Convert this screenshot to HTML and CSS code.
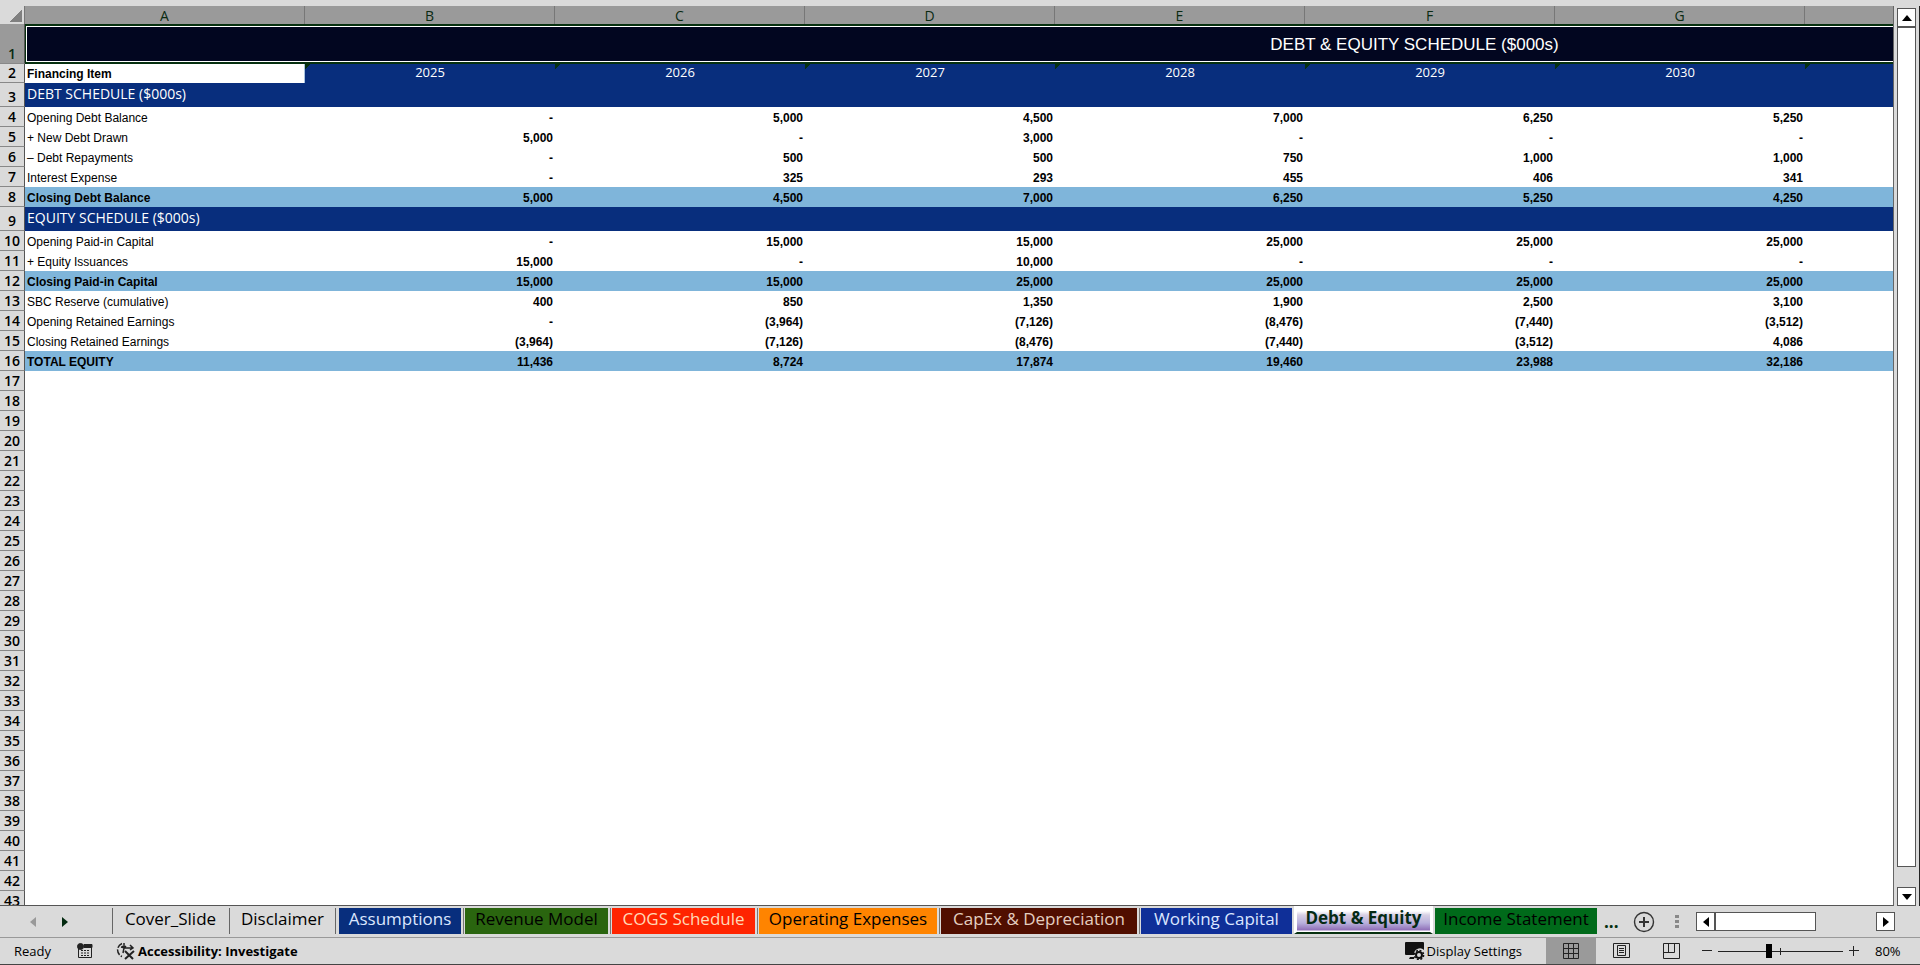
FILE: index.html
```html
<!DOCTYPE html>
<html lang="en">
<head>
  <meta charset="UTF-8" />
  <title>Debt &amp; Equity</title>
  <link rel="stylesheet" href="styles.css">
</head>
<body>

  <main class="workspace">
    <div class="sheet">
      <table id="grid">
        <colgroup>
          <col class="col-num"><col class="col-a">
          <col class="col"><col class="col"><col class="col"><col class="col"><col class="col">
          <col class="col"><col class="col"><col class="col"><col class="col"><col class="col">
        </colgroup>
        <thead>
          <tr class="letters">
            <th class="corner"></th><th>A</th><th>B</th><th>C</th><th>D</th><th>E</th><th>F</th><th>G</th><th></th><th></th><th></th><th></th>
          </tr>
        </thead>
        <tbody id="rows"></tbody>
      </table>
    </div>
    <div class="vscroll">
      <button class="arrow" aria-label="Scroll up"><svg width="10" height="6"><path d="M5 0l5 6H0z"/></svg></button>
      <div class="vthumb"></div>
      <button class="arrow" aria-label="Scroll down"><svg width="10" height="6"><path d="M0 0h10L5 6z"/></svg></button>
    </div>
  </main>

  <nav class="tabbar">
    <div class="tabnav">
      <button aria-label="Previous sheet"><svg width="6" height="10" fill="#999"><path d="M6 0v10L0 5z"/></svg></button>
      <button aria-label="Next sheet"><svg width="6" height="10" fill="#032a10"><path d="M0 0v10l6-5z"/></svg></button>
    </div>
    <div class="tabs">
      <button class="tab cover">Cover_Slide</button>
      <button class="tab disclaimer">Disclaimer</button>
      <button class="tab navy">Assumptions</button>
      <button class="tab green">Revenue Model</button>
      <button class="tab red">COGS Schedule</button>
      <button class="tab orange">Operating Expenses</button>
      <button class="tab brown">CapEx &amp; Depreciation</button>
      <button class="tab blue">Working Capital</button>
      <button class="tab active">Debt &amp; Equity</button>
      <button class="tab emerald">Income Statement</button>
    </div>
    <button class="more">...</button>
    <button class="add" aria-label="New sheet">
      <svg width="22" height="22" fill="none" stroke="#333"><circle cx="11" cy="11" r="9.5" stroke-width="1.4"/><path d="M11 6v10M6 11h10" stroke-width="2"/></svg>
    </button>
    <svg class="grip" width="4" height="14" fill="#888"><path d="M0 0h4v3H0zM0 5h4v3H0zM0 10h4v3H0z"/></svg>
    <div class="hscroll">
      <button class="arrow" aria-label="Scroll left"><svg width="6" height="10"><path d="M6 0v10L0 5z"/></svg></button>
      <div class="hthumb"></div>
      <button class="arrow" aria-label="Scroll right"><svg width="6" height="10"><path d="M0 0v10l6-5z"/></svg></button>
    </div>
  </nav>

  <footer class="status">
    <span class="ready">Ready</span>
    <button class="macro" aria-label="Record macro">
      <svg width="16" height="16" fill="none" stroke="#222"><path d="M1.500 5v9.500h13V2.500H7" /><path d="M7 1.500h8v3H7z" fill="#222"/><circle cx="3.500" cy="3.500" r="3" fill="#222"/><path d="M4 7.500h9M4 10h9M4 12.500h9" stroke-dasharray="2 1"/></svg>
    </button>
    <button class="access">
      <svg width="20" height="18" fill="none" stroke="#222" stroke-width="1.500"><path d="M6 1.500A7 7 0 0 0 6 14.500" stroke-dasharray="6 1.500"/><path d="M5 5l4 1h7M14 3l3 3-3 2M8 1v5l-1 5M6 4l2 2 2-2"/><path d="M9 9l8 8M18 9l-9 8" stroke-width="2"/></svg>
      Accessibility: Investigate
    </button>
    <button class="display">
      <svg width="20" height="18" fill="#111"><path d="M1 0h17q1 0 1 1v7a6 6 0 0 0-10 5H1q-1 0-1-1V1q0-1 1-1zM5 15h4v2H4z"/><circle cx="14" cy="13" r="3" fill="none" stroke="#111" stroke-width="2"/><circle cx="14" cy="13" r="4.600" fill="none" stroke="#111" stroke-width="1.500" stroke-dasharray="2 1.600"/></svg>
      Display Settings
    </button>
    <div class="views">
      <button class="view on" aria-label="Normal">
        <svg width="17" height="17" fill="none" stroke="#222"><path d="M.5.5h15v15H.5zM5.500.5v15M10.500.5v15M.5 5.500h15M.5 10.500h15"/></svg>
      </button>
      <button class="view" aria-label="Page layout">
        <svg width="17" height="17" fill="none" stroke="#222"><path d="M.5.5h16v14H.5zM4.500 2.500h8v10h-8zM6 5.500h5M6 7.500h5M6 9.500h5"/></svg>
      </button>
      <button class="view" aria-label="Page break preview">
        <svg width="17" height="17" fill="none" stroke="#222"><path d="M.5.5h16v15H.5zM.5 9.500h11V.5M5.500.5v9"/></svg>
      </button>
    </div>
    <button class="step" aria-label="Zoom out"><svg width="10" height="10" stroke="#222"><path d="M0 4.500h10"/></svg></button>
    <input type="range" class="zoom" min="10" max="150" value="66" aria-label="Zoom">
    <button class="step" aria-label="Zoom in"><svg width="10" height="10" stroke="#222"><path d="M0 4.500h10M4.500 0v10"/></svg></button>
    <span class="percent">80%</span>
  </footer>

  <script src="script.js"></script>
</body>
</html>
```
FILE: styles.css
```css
* { box-sizing: border-box; }
body {
  margin: 0;
  height: 100vh;
  display: flex;
  flex-direction: column;
  overflow: hidden;
  background: #dadada;
  color: #000;
  font-family: "Open Sans", "Noto Sans", sans-serif;
  border-bottom: 1px solid #444;
}
button {
  margin: 0;
  padding: 0;
  border: none;
  background: none;
  font: inherit;
  color: inherit;
}
svg { display: block; }

/* sheet */
.workspace {
  flex: 1;
  min-height: 0;
  display: flex;
  padding-top: 6px;
}
.sheet {
  flex: 1;
  min-width: 0;
  overflow: hidden;
  background: #fff;
  border-right: 1px solid #666;
  border-bottom: 1px solid #555;
}
table {
  width: 2805px;
  table-layout: fixed;
  border-collapse: separate;
  border-spacing: 0;
}
.col-num { width: 25px; }
.col-a { width: 280px; }
.col { width: 250px; }
th, td { padding: 0; overflow: hidden; white-space: nowrap; }
.letters th {
  height: 18px;
  padding-top: 2px;
  background: #9a9a9a;
  border-right: 1px solid #777;
  color: #0a2a12;
  font-size: 14px;
  line-height: 16px;
  font-weight: 500;
}
.letters .corner {
  background: linear-gradient(135deg, #dadada 50%, #808080 50%) 10px 4px / 12px 12px no-repeat #dadada;
}
.num {
  height: 20px;
  background: #dadada;
  border-right: 1px solid #555;
  border-bottom: 1px solid #888;
  font-size: 14px;
  line-height: 19px;
  font-weight: 600;
  vertical-align: bottom;
}
td {
  height: 20px;
  padding: 2px 2px 0;
  font: 12px/18px "Liberation Sans", Arial, sans-serif;
}
td.value {
  text-align: right;
  font-weight: bold;
}
.title .num { height: 40px; background: #9a9a9a; color: #0a2a12; }
.title td {
  background: #020620;
  border: 2px solid #06300f;
  border-left-width: 1px;
  box-shadow: inset 0 0 0 1px #fff;
  color: #fff;
  text-align: center;
  font-size: 17px;
}
.years .num, .years td { height: 19px; line-height: 18px; }
.years td {
  padding-top: 0;
  font-weight: bold;
  border-right: 1px solid #a9c4e0;
}
.years .year {
  padding-bottom: 2px;
  border: none;
  background: linear-gradient(135deg, #06300f 4px, transparent 4px) #082e7d;
  color: #fff;
  font: 13px/17px "Open Sans", sans-serif;
  text-align: center;
}
.section .num { height: 24px; }
.section td {
  height: 24px;
  padding: 0 2px 2px;
  background: #082e7d;
  color: #fff;
  font: 14px/22px "Open Sans", sans-serif;
}
.total td { background: #7fb5da; font-weight: bold; }

.vscroll {
  width: 26px;
  display: flex;
  flex-direction: column;
  padding: 2px 4px 0 3px;
  border-right: 1px solid #222;
}
.arrow {
  display: grid;
  place-items: center;
  flex: none;
  width: 19px;
  height: 19px;
  background: #fff;
  border: 1px solid #555;
}
.vthumb {
  flex: 1;
  width: 19px;
  margin-bottom: 20px;
  background: #fff;
  border: 1px solid #555;
}

/* sheet tabs */
.tabbar {
  flex: none;
  height: 32px;
  display: flex;
  align-items: center;
  border-bottom: 1px solid #999;
}
.tabnav {
  width: 112px;
  display: flex;
  gap: 26px;
  padding-left: 30px;
}
.tabs {
  height: 32px;
  display: flex;
  font-size: 17px;
  line-height: 22px;
}
.tab {
  flex: none;
  height: 26px;
  margin-top: 2px;
  padding-bottom: 3px;
  border-right: 1px solid #dadada;
}
/* divider between two tabs */
.tab:nth-child(n+3):nth-child(-n+7) {
  margin-right: 4px;
  border: none;
  box-shadow: 2px 0 #dadada, 3px 0 #777;
}
.cover, .disclaimer { border-left: 1px solid #666; }
.cover { width: 117px; }
.disclaimer { width: 107px; border-right: 1px solid #666; margin-right: 3px; }
.navy { width: 122px; background: #082e7d; color: #dbe6ff; }
.green { width: 143px; background: #2a650f; }
.red { width: 143px; background: #ff2400; color: #ffd9b8; }
.orange { width: 178px; background: #ff8400; font-weight: 500; }
.brown { width: 196px; background: #500e00; color: #e5cfc0; }
.blue { width: 152px; background: #0f2f98; color: #dbe6ff; margin-right: 1px; }
.active {
  width: 139px;
  height: 28px;
  margin: 0 2px 0 0;
  padding-bottom: 1px;
  border: 3px solid #fff;
  border-top: none;
  border-bottom: 2px solid #06300f;
  background: linear-gradient(#fff 5px, #d8d0e4 9px, #b8b0dc 17px, #9070b8 24px, #fff 25px);
  color: #052a14;
  font-weight: bold;
}
.emerald { width: 163px; background: #006a1a; }
.more {
  margin-left: 6px;
  font-size: 17px;
  font-weight: bold;
  color: #063010;
  line-height: 20px;
}
.add { margin-left: 14px; }
.grip { margin: 0 17px 0 auto; }
.hscroll { display: flex; margin-right: 25px; }
.hthumb {
  width: 101px;
  height: 19px;
  margin-right: 60px;
  background: #fff;
  border: 1px solid #555;
}

/* status bar */
.status {
  flex: none;
  height: 26px;
  display: flex;
  align-items: center;
  font-size: 13px;
}
.ready { width: 63px; padding-left: 14px; }
.macro { width: 53px; padding-left: 14px; }
.access, .display { display: flex; align-items: center; gap: 2px; }
.access { font-weight: bold; }
.display { margin-left: auto; }
.views { display: flex; margin: 0 6px 0 24px; }
.view {
  display: grid;
  place-items: center;
  width: 50px;
  height: 26px;
}
.on { background: #9a9a9a; }
.zoom {
  appearance: none;
  width: 125px;
  height: 16px;
  margin: 0 6px;
  background: linear-gradient(#222, #222) 62px 50% / 1px 7px no-repeat,
    linear-gradient(#222, #222) 0 50% / 100% 1px no-repeat;
}
.zoom::-webkit-slider-thumb {
  appearance: none;
  width: 6px;
  height: 14px;
  background: #000;
}
.percent { width: 61px; padding-left: 16px; }
```
FILE: script.js
```js
const rows = [
  ['title', 'DEBT & EQUITY SCHEDULE ($000s)'],
  ['years', 'Financing Item', '2025', '2026', '2027', '2028', '2029', '2030'],
  ['section', 'DEBT SCHEDULE ($000s)'],
  ['', 'Opening Debt Balance', '-', '5,000', '4,500', '7,000', '6,250', '5,250'],
  ['', '+ New Debt Drawn', '5,000', '-', '3,000', '-', '-', '-'],
  ['', '– Debt Repayments', '-', '500', '500', '750', '1,000', '1,000'],
  ['', 'Interest Expense', '-', '325', '293', '455', '406', '341'],
  ['total', 'Closing Debt Balance', '5,000', '4,500', '7,000', '6,250', '5,250', '4,250'],
  ['section', 'EQUITY SCHEDULE ($000s)'],
  ['', 'Opening Paid-in Capital', '-', '15,000', '15,000', '25,000', '25,000', '25,000'],
  ['', '+ Equity Issuances', '15,000', '-', '10,000', '-', '-', '-'],
  ['total', 'Closing Paid-in Capital', '15,000', '15,000', '25,000', '25,000', '25,000', '25,000'],
  ['', 'SBC Reserve (cumulative)', '400', '850', '1,350', '1,900', '2,500', '3,100'],
  ['', 'Opening Retained Earnings', '-', '(3,964)', '(7,126)', '(8,476)', '(7,440)', '(3,512)'],
  ['', 'Closing Retained Earnings', '(3,964)', '(7,126)', '(8,476)', '(7,440)', '(3,512)', '4,086'],
  ['total', 'TOTAL EQUITY', '11,436', '8,724', '17,874', '19,460', '23,988', '32,186'],
];

const body = document.getElementById('rows');

for (let i = 0; i < 43; i++) {
  const [type, label, ...values] = rows[i] || ['', ''];
  const tr = body.insertRow();
  tr.className = type;

  const num = document.createElement('th');
  num.className = 'num';
  num.textContent = i + 1;
  tr.append(num);

  const first = tr.insertCell();
  first.textContent = label;
  if (type === 'title' || type === 'section') {
    first.colSpan = 11;
    continue;
  }

  for (let c = 0; c < 10; c++) {
    const td = tr.insertCell();
    td.className = type === 'years' ? 'year' : 'value';
    td.textContent = values[c] || '';
  }
}
```
